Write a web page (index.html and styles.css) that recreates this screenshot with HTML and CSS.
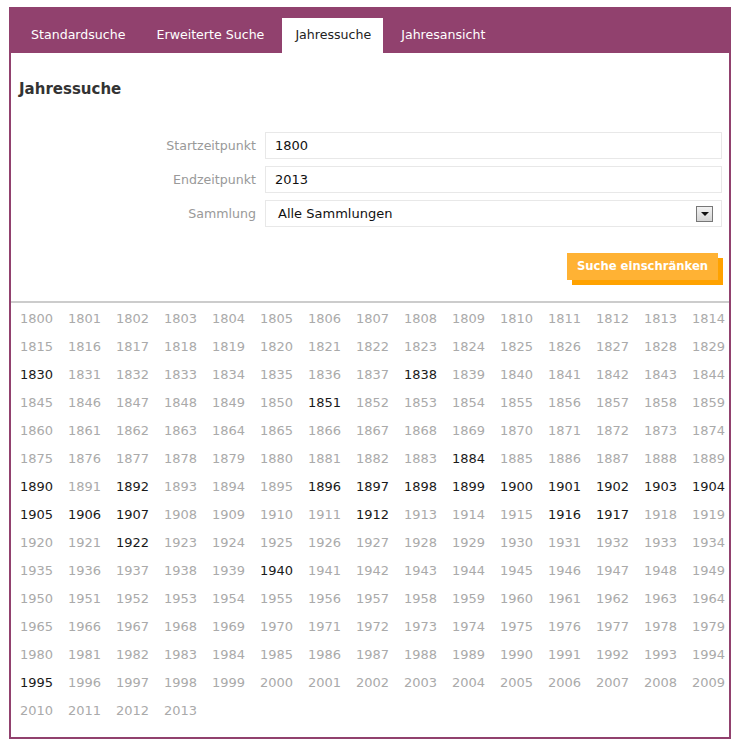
FILE: index.html
```html
<!DOCTYPE html>
<html lang="de">
<head>
<meta charset="utf-8">
<title>Jahressuche</title>
<link rel="stylesheet" href="styles.css">
</head>
<body>
<div class="panel">
  <ul class="tabs">
    <li class="tab">Standardsuche</li>
    <li class="tab">Erweiterte Suche</li>
    <li class="tab active">Jahressuche</li>
    <li class="tab">Jahresansicht</li>
  </ul>
  <div class="content">
    <h2 class="title">Jahressuche</h2>
    <form class="form">
      <label class="label">Startzeitpunkt</label>
      <div class="field">1800</div>
      <label class="label">Endzeitpunkt</label>
      <div class="field">2013</div>
      <label class="label">Sammlung</label>
      <div class="field select"><span class="select-text">Alle Sammlungen</span><span class="arrow"></span></div>
    </form>
    <div class="actions"><span class="button">Suche einschränken</span></div>
  </div>
  <div class="years" id="years"></div>
</div>
<script src="app.js"></script>
</body>
</html>
```
FILE: app.js
```js
(function () {
  var dark = [1830, 1838, 1851, 1884, 1890, 1892, 1896, 1897, 1898, 1899, 1900, 1901, 1902, 1903, 1904, 1905, 1906, 1907, 1912, 1916, 1917, 1922, 1940, 1995];
  var box = document.getElementById('years');
  for (var y = 1800; y <= 2013; y++) {
    var a = document.createElement('span');
    a.className = dark.indexOf(y) >= 0 ? 'year has' : 'year';
    a.textContent = y;
    box.appendChild(a);
  }
})();
```
FILE: styles.css
```css
html, body {
  margin: 0;
  padding: 0;
  background: #fff;
}
body {
  font-family: "DejaVu Sans", Verdana, sans-serif;
  font-size: 13px;
  color: #222;
}
.panel {
  width: 718px;
  margin: 7px 0 0 9px;
  border: 2px solid #91416e;
}
.tabs {
  list-style: none;
  margin: 0;
  padding: 9px 0 0 7px;
  background: #91416e;
  display: flex;
  gap: 5px;
}
.tab {
  height: 35px;
  line-height: 34px;
  padding: 0 13px;
  color: #fff;
  font-size: 12.6px;
  white-space: nowrap;
}
.tab.active {
  background: #fff;
  color: #222;
  padding: 0 12px 0 13px;
}
.content {
  padding: 0 7px 0 8px;
}
.title {
  margin: 0;
  padding: 27px 0 0;
  font-size: 15px;
  line-height: 18px;
  font-weight: bold;
  color: #333;
}
.form {
  display: grid;
  grid-template-columns: 1fr 457px;
  column-gap: 9px;
  row-gap: 7px;
  align-items: center;
  margin-top: 34px;
}
.label {
  text-align: right;
  color: #999;
  font-size: 12.6px;
}
.field {
  height: 27px;
  box-sizing: border-box;
  border: 1px solid #e8e8e8;
  padding: 0 9px;
  line-height: 25px;
  color: #111;
}
.select {
  display: flex;
  align-items: center;
  justify-content: space-between;
  padding: 0 8px 0 12px;
}
.arrow {
  width: 15px;
  height: 14px;
  border: 1px solid #777;
  background: linear-gradient(#f2f2f2, #d4d4d4);
  display: flex;
  align-items: center;
  justify-content: center;
}
.arrow::after {
  content: "";
  width: 0;
  height: 0;
  border-left: 4px solid transparent;
  border-right: 4px solid transparent;
  border-top: 4px solid #111;
  margin-top: 1px;
}
.actions {
  display: flex;
  justify-content: flex-end;
  padding: 26px 4px 0 0;
  height: 48px;
}
.button {
  height: 27px;
  line-height: 27px;
  padding: 0 10px;
  background: #ffb234;
  color: #fff;
  font-weight: bold;
  font-size: 11.6px;
  box-shadow: 5px 5px 0 #ffa200;
}
.years {
  border-top: 2px solid #cccccc;
  margin-top: 0;
  padding: 2px 0 12px 9px;
  display: grid;
  grid-template-columns: repeat(15, 33px);
  column-gap: 15px;
  line-height: 28px;
}
.year {
  color: #aaa;
  white-space: nowrap;
}
.year.has {
  color: #1a1a1a;
}
```
